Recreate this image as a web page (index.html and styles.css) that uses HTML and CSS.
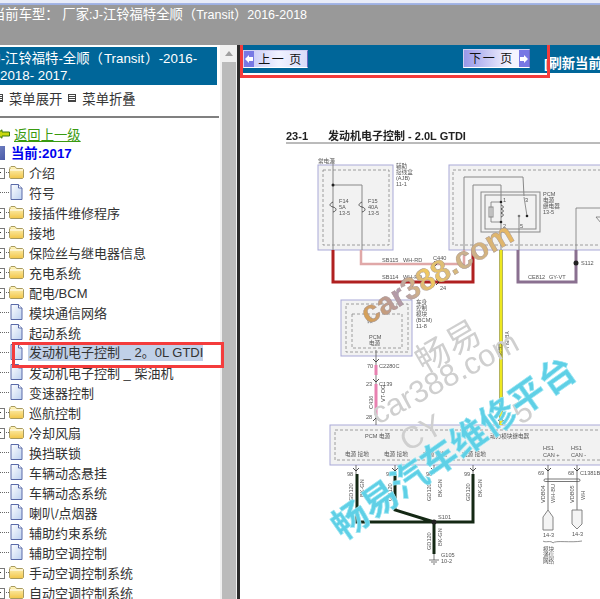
FILE: index.html
```html
<!DOCTYPE html>
<html lang="zh">
<head>
<meta charset="utf-8">
<title>车型</title>
<link rel="stylesheet" href="styles.css">
</head>
<body>
<svg class="defs" width="0" height="0" aria-hidden="true">
  <defs>
    <linearGradient id="fg" x1="0" y1="0" x2="0" y2="1"><stop offset="0" stop-color="#fff6c0"/><stop offset="1" stop-color="#f2c64a"/></linearGradient>
    <linearGradient id="dg" x1="0" y1="0" x2="1" y2="1"><stop offset="0" stop-color="#ffffff"/><stop offset="1" stop-color="#bcd0f0"/></linearGradient>
    <symbol id="folder" viewBox="0 0 15 14">
      <path d="M1 4V2.5L2 1.5H6L7.5 3.5H13.5L14.5 4.5V12.5L13.5 13.5H1.5L.5 12.5V4Z" fill="url(#fg)" stroke="#a89a60"/>
      <path d="M1 5H14" stroke="#fff" stroke-width="1"/>
    </symbol>
    <symbol id="doc" viewBox="0 0 13 16">
      <path d="M1 .5H8.5L12 4V15.5H1Z" fill="url(#dg)" stroke="#5a6aa8"/>
      <path d="M8.5 .5V4H12" fill="#fff" stroke="#5a6aa8"/>
    </symbol>
    <symbol id="pg-left" viewBox="0 0 8 8"><path d="M0 4L4 0V2H8V6H4V8Z" fill="#fff"/></symbol>
    <symbol id="pg-right" viewBox="0 0 8 8"><path d="M8 4L4 0V2H0V6H4V8Z" fill="#fff"/></symbol>
  </defs>
</svg>
<div class="app">
  <header class="top">
    <div class="top-strip"></div>
    <div class="top-text">当前车型：&nbsp;厂家<span class="lat">:J-</span>江铃福特全顺（<span class="lat">Transit</span>）<span class="lat">2016-2018</span></div>
  </header>
  <main class="main">
    <aside class="left">
      <div class="left-body">
        <div class="heading">J-江铃福特-全顺（&#x200A;Transit&#x200A;）-2016-<br>2018- 2017.</div>
        <div class="menu">
          <span class="menu-icon"></span><span class="menu-label">菜单展开</span>
          <span class="menu-icon menu-gap"></span><span class="menu-label">菜单折叠</span>
        </div>
        <div class="rule"></div>
        <div class="tree">
          <div class="row back">
            <svg class="arrow-icon" width="14" height="10" viewBox="0 0 14 10"><path d="M.5 5L6 .8V3H13.5V7H6V9.2Z" fill="#c8d810" stroke="#3a7a10"/></svg>
            <a class="back-link">返回上一级</a>
          </div>
          <div class="row current">
            <span class="cur-icon"></span>
            <span class="cur-text">当前:2017</span>
          </div>
          <div class="row"><span class="exp plus"></span><svg class="fi"><use href="#folder"/></svg><span class="item">介绍</span></div>
          <div class="row"><span class="exp"></span><svg class="di"><use href="#doc"/></svg><span class="item">符号</span></div>
          <div class="row"><span class="exp plus"></span><svg class="fi"><use href="#folder"/></svg><span class="item">接插件维修程序</span></div>
          <div class="row"><span class="exp plus"></span><svg class="fi"><use href="#folder"/></svg><span class="item">接地</span></div>
          <div class="row"><span class="exp plus"></span><svg class="fi"><use href="#folder"/></svg><span class="item">保险丝与继电器信息</span></div>
          <div class="row"><span class="exp plus"></span><svg class="fi"><use href="#folder"/></svg><span class="item">充电系统</span></div>
          <div class="row"><span class="exp plus"></span><svg class="fi"><use href="#folder"/></svg><span class="item">配电/BCM</span></div>
          <div class="row"><span class="exp"></span><svg class="di"><use href="#doc"/></svg><span class="item">模块通信网络</span></div>
          <div class="row"><span class="exp"></span><svg class="di"><use href="#doc"/></svg><span class="item">起动系统</span></div>
          <div class="row"><span class="exp"></span><svg class="di"><use href="#doc"/></svg><span class="item selected">发动机电子控制 _ 2。0L GTDI</span></div>
          <div class="row"><span class="exp"></span><svg class="di"><use href="#doc"/></svg><span class="item">发动机电子控制 _ 柴油机</span></div>
          <div class="row"><span class="exp"></span><svg class="di"><use href="#doc"/></svg><span class="item">变速器控制</span></div>
          <div class="row"><span class="exp plus"></span><svg class="fi"><use href="#folder"/></svg><span class="item">巡航控制</span></div>
          <div class="row"><span class="exp plus"></span><svg class="fi"><use href="#folder"/></svg><span class="item">冷却风扇</span></div>
          <div class="row"><span class="exp"></span><svg class="di"><use href="#doc"/></svg><span class="item">换挡联锁</span></div>
          <div class="row"><span class="exp"></span><svg class="di"><use href="#doc"/></svg><span class="item">车辆动态悬挂</span></div>
          <div class="row"><span class="exp"></span><svg class="di"><use href="#doc"/></svg><span class="item">车辆动态系统</span></div>
          <div class="row"><span class="exp"></span><svg class="di"><use href="#doc"/></svg><span class="item">喇叭/点烟器</span></div>
          <div class="row"><span class="exp"></span><svg class="di"><use href="#doc"/></svg><span class="item">辅助约束系统</span></div>
          <div class="row"><span class="exp"></span><svg class="di"><use href="#doc"/></svg><span class="item">辅助空调控制</span></div>
          <div class="row"><span class="exp plus"></span><svg class="fi"><use href="#folder"/></svg><span class="item">手动空调控制系统</span></div>
          <div class="row"><span class="exp plus"></span><svg class="fi"><use href="#folder"/></svg><span class="item">自动空调控制系统</span></div>
        </div>
      </div>
      <div class="scrollbar"><div class="scroll-arrow"></div><div class="scroll-thumb"></div></div>
      <div class="divider"></div>
    </aside>
    <section class="right">
      <nav class="nav">
        <button class="pg prev"><span class="pg-arrow"><svg class="pg-glyph"><use href="#pg-left"/></svg></span><span class="pg-label">上一 页</span></button>
        <button class="pg next"><span class="pg-label">下一 页</span><span class="pg-arrow"><svg class="pg-glyph"><use href="#pg-right"/></svg></span></button>
        <span class="refresh">[刷新当前页面]</span>
      </nav>
      <div class="red-nav"></div>
      <svg class="diagram" viewBox="240 73 360 526" width="360" height="526">
        <text class="title" x="286" y="140">23-1</text>
        <text class="title cjk" x="328" y="140">发动机电子控制 - 2.0L GTDI</text>
        <line class="title-rule" x1="286" y1="143" x2="600" y2="143"/>

        <rect class="box" x="318" y="165" width="75" height="85"/>
        <rect class="dash" x="323" y="170" width="66" height="75"/>
        <rect class="box" x="449" y="165" width="160" height="85"/>
        <rect class="dash" x="453" y="170" width="160" height="75"/>
        <rect class="box" x="341" y="300" width="71" height="56"/>
        <rect class="dash" x="346" y="304" width="62" height="48"/>
        <rect class="dash" x="352" y="314" width="50" height="34"/>
        <rect class="box" x="330" y="425" width="280" height="40"/>
        <rect class="dash" x="335" y="430" width="275" height="30"/>

        <path class="wire" d="M333 160V250M333 185H362V250"/>
        <circle class="dot" cx="333" cy="185" r="1.5"/>
        <path class="fuse" d="M333 202c-4 2 -4 4 0 5c4 1 4 4 0 5M362 202c-4 2 -4 4 0 5c4 1 4 4 0 5"/>
        <path class="wire" d="M464 250V177H523L524 196M473 250V185H501V250M519 250V217"/>
        <rect class="relay" x="481" y="192" width="59" height="40"/>
        <rect class="relay" x="485" y="195" width="51" height="34"/>
        <path class="wire thin" d="M501 202H491V222H501M576 250V208H600"/>
        <rect class="relay" x="489" y="207" width="4" height="10"/>
        <path class="fuse" d="M501 205c3 1 3 3 0 4c3 1 3 3 0 4c3 1 3 3 0 4"/>
        <path class="wire thin" d="M524 197L527 216"/>
        <circle class="dot" cx="501" cy="202" r="1.3"/><circle class="dot" cx="501" cy="222" r="1.3"/>
        <circle class="dot" cx="527" cy="216" r="1.3"/><circle class="dot gray" cx="519" cy="216" r="1.3"/>
        <path class="triangle" d="M596 217H606L601 223Z"/>

        <path class="w-red" d="M333 250V282H473V250"/>
        <path class="w-pink" d="M361 250V264H464V250"/>
        <path class="w-purple" d="M518 250V282H576V250"/>
        <path class="w-yellow-o" d="M501 250V425"/>
        <path class="w-yellow" d="M501 250V425"/>
        <circle class="dot big" cx="576" cy="263" r="2.5"/>
        <path class="chev" d="M434 261l3 3l-3 3M436 279l3 3l-3 3"/>

        <path class="wire dark" d="M376 350V425"/>
        <path class="w-mag" d="M376 365V375M376 384V415"/>
        <path class="chev" d="M373 359l3 3l3 -3M373 379l3 3l3 -3M373 421l3 -3l3 3M498 421l3 -3l3 3"/>

        <path class="wire dark" d="M356 465V474M395 465V474M434 465V474M473 465V474M548 465V510M577 465V510"/>
        <path class="chev" d="M353 468l3 3l3 -3M392 468l3 3l3 -3M431 468l3 3l3 -3M470 468l3 3l3 -3M545 468l3 3l3 -3M574 468l3 3l3 -3"/>
        <path class="w-black" d="M357 474V522H473V474M395 474V510L434 522M434 522V554"/>
        <circle class="dot big" cx="434" cy="522" r="2.5"/>
        <path class="wire dark" d="M434 554V560M429 560H439M431 562H437M433 564H435"/>
        <rect class="oval" x="544" y="479" width="36" height="2.5" rx="1.2"/>
        <path class="pent" d="M543 530V517L548 510L553 517V530Z"/>
        <path class="pent" d="M572 510V524L577 529L582 524V510Z"/>
        <path class="wire thin" d="M543 541c2 2 8 -1 10 2c2 -3 18 0 29 -2"/>

        <text class="lbl" x="318" y="163">常电源</text>
        <text class="lbl" x="396" y="168">辅助</text><text class="lbl" x="396" y="174">接线盒</text><text class="lbl" x="396" y="180">(AJB)</text><text class="lbl" x="396" y="186">11-1</text>
        <text class="lbl" x="339" y="203">F14</text><text class="lbl" x="339" y="209">5A</text><text class="lbl" x="339" y="215">13-5</text>
        <text class="lbl" x="368" y="203">F15</text><text class="lbl" x="368" y="209">40A</text><text class="lbl" x="368" y="215">13-5</text>
        <text class="lbl" x="503" y="202">1</text><text class="lbl" x="525" y="202">3</text><text class="lbl" x="503" y="228">2</text><text class="lbl" x="520" y="228">5</text>
        <text class="lbl" x="543" y="196">PCM</text><text class="lbl" x="543" y="202">电源</text><text class="lbl" x="543" y="208">继电器</text><text class="lbl" x="543" y="214">13-5</text>
        <text class="lbl" x="382" y="262">SB115</text><text class="lbl" x="403" y="262">WH-RD</text>
        <text class="lbl" x="382" y="279">SB114</text><text class="lbl" x="403" y="279">WH-RD</text>
        <text class="lbl" x="433" y="260">C440</text><text class="lbl" x="440" y="290">24</text>
        <text class="lbl" x="528" y="279">CE812</text><text class="lbl" x="549" y="279">GY-VT</text><text class="lbl" x="581" y="265">S112</text>
        <text class="lbl" x="416" y="304">车身</text><text class="lbl" x="416" y="310">控制</text><text class="lbl" x="416" y="316">模块</text><text class="lbl" x="416" y="322">(BCM)</text><text class="lbl" x="416" y="328">11-8</text>
        <text class="lbl" x="367" y="322">微</text><text class="lbl" x="369" y="339">PCM</text><text class="lbl" x="369" y="345">电源</text>
        <text class="lbl" x="367" y="368">70</text><text class="lbl" x="379" y="368">C2280C</text>
        <text class="lbl" x="366" y="386">23</text><text class="lbl" x="379" y="386">C139</text><text class="lbl" x="366" y="419">28</text>
        <text class="lbl" transform="translate(373 409) rotate(-90)">C436</text>
        <text class="lbl" transform="translate(385 402) rotate(-90)">VT-OG</text>
        <text class="lbl" transform="translate(498 343) rotate(90)">CE35</text>
        <text class="lbl" transform="translate(505 331) rotate(90)">YE-BU</text>
        <text class="lbl" x="365" y="438">PCM 电源</text><text class="lbl" x="490" y="438">动力模块继电器</text>
        <text class="lbl" x="345" y="456">电源 接地</text><text class="lbl" x="384" y="456">电源 接地</text><text class="lbl" x="423" y="456">电源 接地</text><text class="lbl" x="462" y="456">电源 接地</text>
        <text class="lbl" x="543" y="450">HS1</text><text class="lbl" x="543" y="457">CAN +</text>
        <text class="lbl" x="571" y="450">HS1</text><text class="lbl" x="571" y="457">CAN -</text>
        <text class="lbl" x="347" y="476">98</text><text class="lbl" x="386" y="476">97</text><text class="lbl" x="426" y="476">96</text><text class="lbl" x="464" y="476">99</text>
        <text class="lbl" x="538" y="475">69</text><text class="lbl" x="568" y="475">68</text><text class="lbl" x="580" y="475">C1381B</text>
        <text class="lbl" transform="translate(353 501) rotate(-90)">GD120</text><text class="lbl" transform="translate(364 497) rotate(-90)">BK-GN</text>
        <text class="lbl" transform="translate(392 501) rotate(-90)">GD120</text>
        <text class="lbl" transform="translate(431 501) rotate(-90)">GD120</text><text class="lbl" transform="translate(442 497) rotate(-90)">BK-GN</text>
        <text class="lbl" transform="translate(470 501) rotate(-90)">GD120</text><text class="lbl" transform="translate(482 497) rotate(-90)">BK-GN</text>
        <text class="lbl" transform="translate(431 550) rotate(-90)">GD120</text><text class="lbl" transform="translate(442 546) rotate(-90)">BK-GN</text>
        <text class="lbl" transform="translate(545 503) rotate(-90)">VDB04</text><text class="lbl" transform="translate(555 503) rotate(-90)">WH-BU</text>
        <text class="lbl" transform="translate(574 503) rotate(-90)">VDB05</text><text class="lbl" transform="translate(585 500) rotate(-90)">WH</text>
        <text class="lbl" x="438" y="519">S101</text><text class="lbl" x="441" y="557">G105</text><text class="lbl" x="441" y="563">10-2</text>
        <text class="lbl" x="543" y="537">14-3</text><text class="lbl" x="572" y="536">14-3</text>
        <text class="lbl" x="543" y="551">模块</text><text class="lbl" x="543" y="557">通信</text><text class="lbl" x="543" y="563">网络</text>

        <defs>
          <linearGradient id="wm" x1="0" y1="0" x2="1" y2="0">
            <stop offset="0" stop-color="#d8a050"/><stop offset=".25" stop-color="#b09ab0"/><stop offset=".45" stop-color="#f0c860"/><stop offset=".7" stop-color="#c8b090"/><stop offset="1" stop-color="#e8b860"/>
          </linearGradient>
        </defs>
        <text class="wm-gray wm-cn" transform="translate(424 374) rotate(-30)">畅易</text>
        <text class="wm-gray wm-en" transform="translate(378 425) rotate(-28)">car388.com</text>
        <text class="wm-gray wm-en" transform="translate(407 452) rotate(-28)">CY</text>
        <text class="wm-gray wm-en" transform="translate(520 425) rotate(-28)">5</text>
        <text class="wm-orange" transform="translate(368 325) rotate(-30)">car388.com</text>
        <text class="wm-cyan" transform="translate(343 541) rotate(-35)">畅易汽车维修平台</text>
      </svg>
    </section>
  </main>
  <div class="red-item"></div>
</div>
</body>
</html>
```
FILE: styles.css
```css
* { box-sizing: border-box; }
html, body { margin: 0; padding: 0; height: 100%; overflow: hidden; background: #fff; }
body { font-family: "Liberation Sans", "Noto Sans CJK SC", sans-serif; font-size: 13.33px; color: #333; }
.defs { position: absolute; }

.app { position: relative; width: 600px; height: 599px; overflow: hidden; display: flex; flex-direction: column; }

.top { height: 45px; flex: none; background: #999; color: #fff; overflow: hidden; }
.top-strip { height: 5px; background: linear-gradient(#e8ecf8 0, #e8ecf8 50%, #a8b8e8 60%, #9aaee0 100%); }
.top-text { margin-left: -8px; line-height: 17px; margin-top: 1px; white-space: nowrap; }
.lat { font-size: 12.5px; }

.main { flex: 1; display: flex; min-height: 0; }

.left { flex: none; width: 240px; display: flex; background: #fff; }
.left-body { width: 220px; flex: none; padding-top: 2px; overflow: hidden; }
.heading { width: 217px; height: 38px; background: #006699; color: #fff; line-height: 17px; padding-top: 3px; text-indent: -6px; white-space: nowrap; overflow: hidden; }

.menu { display: flex; align-items: center; height: 20px; margin-top: 3px; white-space: nowrap; margin-left: -5px; }
.menu-icon { width: 8px; height: 8px; border: 1px solid #444; background: repeating-linear-gradient(#fff 0 1px, #444 1px 2px); flex: none; }
.menu-label { margin-left: 6px; color: #333; }
.menu-gap { margin-left: 6px; }

.rule { height: 2px; background: #808080; margin-top: 8px; width: 219px; }

.tree { margin-left: -8px; margin-top: 7px; font-size: 13px; }
.row { display: flex; align-items: center; height: 20px; white-space: nowrap; }
.back { height: 18px; }
.current { height: 19px; }
.arrow-icon { margin-left: 4px; flex: none; margin-right: 4px; }
.back-link { color: #3a9a10; text-decoration: underline; font-size: 13.33px; }
.cur-icon { width: 13px; height: 14px; background: linear-gradient(135deg, #7a8ac8, #4a5aa8); flex: none; margin-right: 6px; }
.cur-text { color: #0000ee; font-weight: 700; font-size: 13.33px; }

.exp { width: 17px; height: 1px; flex: none; border-bottom: 1px dotted #666; position: relative; }
.plus::before { content: ""; position: absolute; left: 2px; top: -4px; width: 9px; height: 9px; border: 1px solid #777; background: #fff; }
.plus::after { content: ""; position: absolute; left: 4px; top: 0; width: 5px; height: 1px; background: #333; }
.fi { width: 15px; height: 14px; flex: none; }
.di { width: 13px; height: 16px; flex: none; margin: 0 1px; }
.item { margin-left: 5px; color: #333; }
.selected { background: #c0d0e8; margin-left: 4px; padding-left: 1px; line-height: 17px; }

.scrollbar { width: 17px; flex: none; background: #f0f0f0; display: flex; flex-direction: column; align-items: center; }
.scroll-arrow { margin-top: 6px; width: 0; height: 0; border-left: 4px solid transparent; border-right: 4px solid transparent; border-bottom: 5px solid #a0a0a0; }
.scroll-thumb { width: 14px; flex: 1; margin-top: 6px; background: #bbb; }
.divider { width: 3px; flex: none; background: #2a2a2a; }

.right { position: relative; flex: 1; min-width: 0; background: #fff; overflow: hidden; }
.nav { height: 28px; margin-left: 1px; background: #006699; display: flex; align-items: flex-start; padding: 5px 0 0 2px; white-space: nowrap; overflow: hidden; }
.pg { display: flex; align-items: stretch; height: 18px; padding: 0; border: 1px solid #8a8ad0; border-color: #d0d0f0 #6a6ac0 #ffffff #d0d0f0; background: linear-gradient(90deg, #c0c0f4, #f0f2ff 55%, #d8dcf8); font: 12px "Noto Sans CJK SC", sans-serif; color: #111; flex: none; }
.prev { width: 65px; }
.next { width: 67px; margin-left: 155px; margin-top: -1px; height: 19px; background: linear-gradient(90deg, #9898e8, #f4f4ff 70%); }
.pg-arrow { width: 10px; background: #7878e4; flex: none; display: flex; align-items: center; justify-content: center; }
.pg-glyph { width: 8px; height: 8px; }
.pg-label { flex: 1; text-align: center; line-height: 16px; letter-spacing: 1.5px; }
.refresh { margin-left: 14px; margin-top: 5px; color: #fff; font-weight: 700; line-height: 17px; }
.red-nav { position: absolute; left: 0; top: -4px; width: 310px; height: 37px; border: 3px solid #f43c3c; pointer-events: none; }

.red-item { position: absolute; left: 12px; top: 342px; width: 212px; height: 26px; border: 3px solid #f43c3c; pointer-events: none; }

.diagram { display: block; filter: blur(0.45px); }
.diagram text { font-family: "Liberation Sans", "Noto Sans CJK SC", sans-serif; }
.title { font-size: 11px; font-weight: 700; fill: #222; }
.title-rule { stroke: #777; stroke-width: 1; }
.box { fill: #f2f2f2; stroke: #a9a9d8; stroke-width: 1; }
.dash { fill: none; stroke: #888; stroke-width: .8; stroke-dasharray: 3 2; }
.wire { fill: none; stroke: #888; stroke-width: 1; }
.wire.thin { stroke-width: .8; stroke: #777; }
.wire.dark { stroke: #555; stroke-width: .8; }
.fuse { fill: none; stroke: #333; stroke-width: .8; }
.relay { fill: none; stroke: #888; stroke-width: 1; }
.dot { fill: #222; }
.dot.gray { fill: #777; }
.triangle { fill: none; stroke: #666; stroke-width: .7; }
.chev { fill: none; stroke: #222; stroke-width: .8; }
.w-red { fill: none; stroke: #b02020; stroke-width: 3; }
.w-pink { fill: none; stroke: #e0a8a8; stroke-width: 2.5; }
.w-purple { fill: none; stroke: #8a7090; stroke-width: 3; }
.w-yellow-o { fill: none; stroke: #808040; stroke-width: 3.5; }
.w-yellow { fill: none; stroke: #eee820; stroke-width: 2.5; }
.w-mag { fill: none; stroke: #e880b0; stroke-width: 3; }
.w-black { fill: none; stroke: #142814; stroke-width: 3; }
.oval { fill: none; stroke: #555; stroke-width: .8; }
.pent { fill: #f4f4f4; stroke: #777; stroke-width: .9; }
.lbl { font-size: 5.6px; fill: #555; }

.wm-gray { fill: #cfcfcf; }
.wm-cn { font-size: 34px; letter-spacing: 1px; }
.wm-en { font-size: 31px; }
.wm-orange { font-size: 31px; font-weight: 700; fill: url(#wm); stroke: #a09090; stroke-width: .4; }
.wm-cyan { font-size: 36px; font-weight: 700; fill: #5fd0e6; stroke: #9ee6f2; stroke-width: .6; }
```
